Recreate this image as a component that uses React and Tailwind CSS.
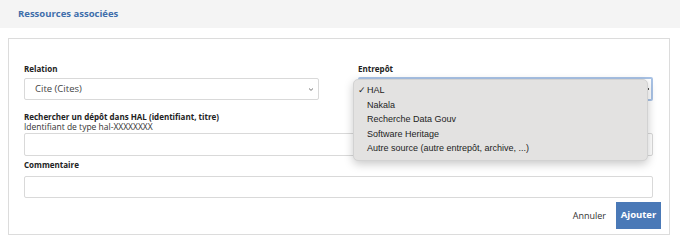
import React from 'react';

const options = [
  'HAL',
  'Nakala',
  'Recherche Data Gouv',
  'Software Heritage',
  'Autre source (autre entrepôt, archive, ...)',
];

const Label = ({ children }) => (
  <div className="text-[8px] font-bold text-[#222] leading-[11px]">{children}</div>
);

const Chevron = () => (
  <svg width="6" height="5" viewBox="0 0 6 5" className="text-[#777]">
    <path d="M1 1.5 L3 3.4 L5 1.5" fill="none" stroke="currentColor" strokeWidth="1" />
  </svg>
);

const App = () => (
  <div className="w-[680px] h-[248px] bg-white overflow-hidden font-['Open_Sans',sans-serif]">
    <div className="h-[28px] bg-[#f4f4f4] px-[18px] flex items-center">
      <h2 className="text-[9.5px] font-bold text-[#3f6eab]">Ressources associées</h2>
    </div>

    <div className="mt-[10px] ml-[8px] w-[662px] h-[197px] border border-[#dcdcdc] pl-[15px] pr-[16px] pt-[24px] flex flex-col">
      <div className="grid grid-cols-2 gap-x-[39px]">
        <div className="flex flex-col">
          <Label>Relation</Label>
          <div className="mt-[4px] h-[22px] border border-[#d9d9d9] rounded-[2px] flex items-center justify-between pl-[10px] pr-[4px]">
            <span className="text-[9.5px] text-[#444]">Cite (Cites)</span>
            <Chevron />
          </div>
        </div>
        <div className="flex flex-col relative">
          <Label>Entrepôt</Label>
          <div className="mt-[3px] h-[24px] border-2 border-[#a9c3e6] rounded-[2px] flex items-center justify-end pr-[2px]">
            <div className="w-[2px] h-[2px] bg-[#555]" />
          </div>
          <ul className="absolute left-[-5px] top-[16px] w-[295px] rounded-[5px] bg-[#e3e2e1] border border-[#d2d2d2] shadow-[0_3px_10px_rgba(0,0,0,0.22)] pt-[3px] pb-[4px] font-['Liberation_Sans',Arial,sans-serif] text-[9px] text-[#1d1d1d] z-10">
            {options.map((o, i) => (
              <li key={o} className="h-[14.5px] leading-[14.5px] flex items-center pl-[4px]">
                <span className="w-[9px] text-[9px]">{i === 0 ? '✓' : ''}</span>
                <span>{o}</span>
              </li>
            ))}
          </ul>
        </div>
      </div>

      <div className="mt-[10px]">
        <Label>Rechercher un dépôt dans HAL (identifiant, titre)</Label>
        <div className="text-[8.5px] text-[#333] leading-[10px]">Identifiant de type hal-XXXXXXXX</div>
        <div className="mt-[1px] h-[23px] border border-[#d9d9d9] rounded-[2px]" />
      </div>

      <div className="mt-[3px]">
        <Label>Commentaire</Label>
        <div className="mt-[6px] h-[22px] border border-[#d9d9d9] rounded-[2px]" />
      </div>

      <div className="mt-[4px] -mr-[8px] flex justify-end items-center gap-[10px]">
        <button className="text-[9px] text-[#333]">Annuler</button>
        <button className="h-[27px] w-[45px] bg-[#4a79b7] text-white text-[9.5px] font-bold">Ajouter</button>
      </div>
    </div>
  </div>
);

export default App;
